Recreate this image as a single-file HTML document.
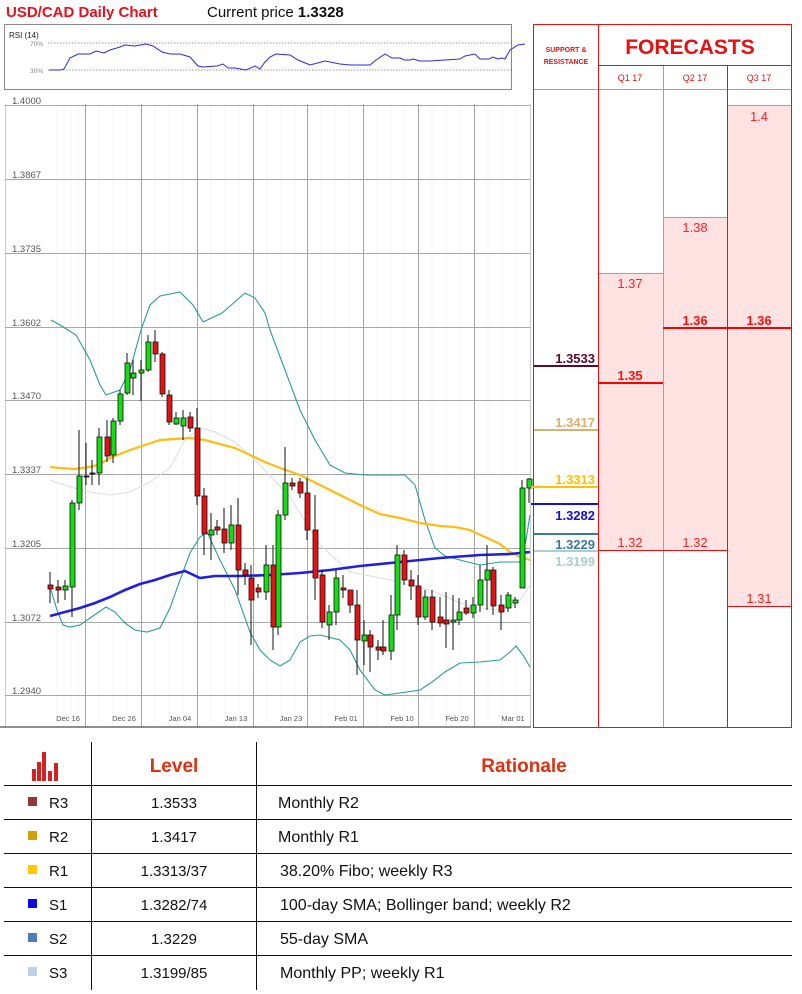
<!DOCTYPE html>
<html><head><meta charset="utf-8"><style>
html,body{margin:0;padding:0;background:#fff;}
body{width:802px;height:994px;overflow:hidden;position:relative;font-family:"Liberation Sans",sans-serif;}
svg{position:absolute;left:0;top:0;}
</style></head><body>
<svg width="802" height="994" viewBox="0 0 802 994" xmlns="http://www.w3.org/2000/svg" font-family="Liberation Sans, sans-serif">
<text x="6" y="17" font-size="15" font-weight="bold" fill="#e8101a">USD/CAD Daily Chart</text>
<text x="207" y="17" font-size="15" fill="#111">Current price <tspan font-weight="bold">1.3328</tspan></text>
<rect x="4.5" y="24.5" width="507" height="65" fill="#fff" stroke="#888"/>
<text x="9" y="38" font-size="8" fill="#222">RSI (14)</text>
<text x="30" y="46" font-size="6.5" fill="#888">70%</text>
<text x="30" y="73" font-size="6.5" fill="#888">30%</text>
<line x1="48" y1="43" x2="512" y2="43" stroke="#777" stroke-dasharray="1.5,1.5" stroke-width="0.8"/>
<line x1="48" y1="70" x2="512" y2="70" stroke="#777" stroke-dasharray="1.5,1.5" stroke-width="0.8"/>
<polyline fill="none" stroke="#2a2ae8" stroke-width="1" points="49,70 60,70 64,69 70,58 78,54 90,54 96,51 104,53 110,50 120,47 125,45 135,46 146,44 153,46 162,52 170,54 180,54 190,57 198,66 203,67 217,66 223,64 228,68 235,68 246,70 255,66 260,69 265,62 270,57 276,54 290,55 298,60 310,65 325,61 340,64 350,65 370,65 376,60 385,54 392,58 400,58 404,60 410,60 413,59 420,61 430,61 445,60 460,59 465,56 475,54 480,59 489,59 493,57 498,59 502,58 505,59 510,50 518,45 525,44"/>

<line x1="5.5" y1="104" x2="5.5" y2="727" stroke="#ccc"/>
<g stroke="#f6f6f6" stroke-width="1">
<line x1="57" y1="104" x2="57" y2="727"/><line x1="64" y1="104" x2="64" y2="727"/><line x1="71" y1="104" x2="71" y2="727"/><line x1="78" y1="104" x2="78" y2="727"/>
<line x1="99" y1="104" x2="99" y2="727"/><line x1="113" y1="104" x2="113" y2="727"/><line x1="127" y1="104" x2="127" y2="727"/>
<line x1="155" y1="104" x2="155" y2="727"/><line x1="169" y1="104" x2="169" y2="727"/><line x1="183" y1="104" x2="183" y2="727"/>
<line x1="211" y1="104" x2="211" y2="727"/><line x1="225" y1="104" x2="225" y2="727"/><line x1="239" y1="104" x2="239" y2="727"/>
<line x1="267" y1="104" x2="267" y2="727"/><line x1="281" y1="104" x2="281" y2="727"/><line x1="295" y1="104" x2="295" y2="727"/>
<line x1="321" y1="104" x2="321" y2="727"/><line x1="335" y1="104" x2="335" y2="727"/><line x1="349" y1="104" x2="349" y2="727"/>
<line x1="377" y1="104" x2="377" y2="727"/><line x1="391" y1="104" x2="391" y2="727"/><line x1="404" y1="104" x2="404" y2="727"/>
<line x1="432" y1="104" x2="432" y2="727"/><line x1="446" y1="104" x2="446" y2="727"/><line x1="460" y1="104" x2="460" y2="727"/>
<line x1="488" y1="104" x2="488" y2="727"/><line x1="502" y1="104" x2="502" y2="727"/><line x1="516" y1="104" x2="516" y2="727"/>
</g>
<g stroke="#a8a8a8" stroke-width="1">
<line x1="85.5" y1="104" x2="85.5" y2="727"/><line x1="141.5" y1="104" x2="141.5" y2="727"/><line x1="197.5" y1="104" x2="197.5" y2="727"/><line x1="253.5" y1="104" x2="253.5" y2="727"/><line x1="307.5" y1="104" x2="307.5" y2="727"/><line x1="363.5" y1="104" x2="363.5" y2="727"/><line x1="418.5" y1="104" x2="418.5" y2="727"/><line x1="474.5" y1="104" x2="474.5" y2="727"/>
<line x1="5" y1="105.5" x2="530" y2="105.5"/><line x1="5" y1="179.5" x2="530" y2="179.5"/><line x1="5" y1="253.5" x2="530" y2="253.5"/><line x1="5" y1="327.5" x2="530" y2="327.5"/><line x1="5" y1="400.5" x2="530" y2="400.5"/><line x1="5" y1="474.5" x2="530" y2="474.5"/><line x1="5" y1="548.5" x2="530" y2="548.5"/><line x1="5" y1="622.5" x2="530" y2="622.5"/><line x1="5" y1="695.5" x2="530" y2="695.5"/>
</g>
<line x1="530.5" y1="104" x2="530.5" y2="727" stroke="#ccc"/>
<g font-size="9.5" fill="#555">
<text x="12" y="104">1.4000</text><text x="12" y="178">1.3867</text><text x="12" y="252">1.3735</text><text x="12" y="326">1.3602</text><text x="12" y="399">1.3470</text><text x="12" y="473">1.3337</text><text x="12" y="547">1.3205</text><text x="12" y="621">1.3072</text><text x="12" y="694">1.2940</text>
</g>
<g font-size="7.5" fill="#555" text-anchor="middle">
<text x="68" y="721">Dec 16</text><text x="124" y="721">Dec 26</text><text x="180" y="721">Jan 04</text><text x="236" y="721">Jan 13</text><text x="291" y="721">Jan 23</text><text x="346" y="721">Feb 01</text><text x="402" y="721">Feb 10</text><text x="457" y="721">Feb 20</text><text x="513" y="721">Mar 01</text>
</g>
<line x1="0" y1="727" x2="531" y2="727" stroke="#222"/>

<polyline fill="none" stroke="#ddd" stroke-width="1" points="50,480 70,487 90,492 110,495 130,492 150,482 170,468 185,440 200,428 215,432 235,442 260,465 290,497 320,545 350,572 390,580 430,590 470,607 500,610 520,600 530,585"/>
<polyline fill="none" stroke="#2a9a9a" stroke-width="1.1" points="51,320 60,325 76,335 90,360 100,385 106,395 120,390 130,370 141,330 150,305 160,296 180,292 193,305 203,322 222,313 245,293 255,298 265,313 270,330 285,370 300,410 315,440 330,465 345,473 365,475 390,475 405,475 415,485 425,520 435,548 445,556 460,560 480,565 500,562 520,562 526,540 530,515"/>
<polyline fill="none" stroke="#2a9a9a" stroke-width="1.1" points="51,590 57,610 63,625 70,627 80,625 90,618 106,607 115,612 125,623 135,630 147,632 160,628 170,608 180,580 190,553 200,537 207,532 220,560 235,590 250,632 260,650 270,660 280,666 290,660 300,642 310,636 320,635 340,640 350,650 360,670 375,690 385,695 400,693 420,690 432,682 445,672 460,663 480,662 500,660 510,652 516,646 523,655 530,667"/>
<polyline fill="none" stroke="#ffbd14" stroke-width="2.2" points="50,467 60,468 75,469 90,467 100,464 110,458 130,450 145,445 160,440 175,439 190,438 205,440 220,444 235,448 250,455 265,462 280,468 300,475 320,485 340,495 360,505 380,514 400,518 420,523 440,526 455,527 470,530 485,537 500,544 510,552 520,557 530,560"/>
<polyline fill="none" stroke="#1f1fe0" stroke-width="2.6" points="50,616 65,612 80,608 95,603 110,597 125,590 140,584 155,580 170,575 185,571 200,578 215,576 240,576 270,575 300,573 330,570 360,566 400,562 440,558 480,555 510,554 530,552"/>

<g stroke="#111" stroke-width="1">
<path d="M50,572V603 M58,580V603 M65,580V600 M72,500V617 M79,430V510 M86,443V485 M92,460V485 M99,428V485 M107,420V462 M113,418V463 M120,390V425 M127,353V395 M133,360V395 M141,360V401 M148,335V372 M155,330V362 M162,352V397 M169,390V425 M176,412V425 M183,410V440 M190,412V432 M197,408V505 M204,488V555 M211,513V560 M217,520V535 M224,508V553 M231,505V550 M238,498V595 M245,563V585 M251,565V645 M258,584V598 M266,545V600 M273,545V650 M278,510V635 M285,447V520 M292,478V490 M300,478V498 M307,478V540 M315,495V600 M322,570V628 M329,605V640 M336,570V625 M343,575V598 M350,590V613 M357,590V675 M364,620V665 M370,630V672 M378,640V660 M383,620V655 M391,595V660 M397,545V630 M404,550V585 M411,570V600 M418,575V625 M425,590V620 M432,590V630 M440,597V627 M446,592V648 M453,595V650 M459,598V625 M466,600V615 M473,597V618 M480,565V612 M487,545V610 M493,567V615 M501,595V630 M508,592V612 M515,597V608 M522,480V570 M529,478V503"/>
</g>
<g stroke="#111" stroke-width="0.8">
<rect x="48" y="585" width="5" height="4" fill="#e81010"/>
<rect x="56" y="587" width="5" height="3" fill="#e81010"/>
<rect x="63" y="586" width="5" height="4" fill="#10e010"/>
<rect x="70" y="503" width="5" height="84" fill="#10e010"/>
<rect x="77" y="476" width="5" height="27" fill="#10e010"/>
<rect x="84" y="476" width="5" height="1" fill="#111"/>
<rect x="90" y="473" width="5" height="1" fill="#111"/>
<rect x="97" y="437" width="5" height="36" fill="#10e010"/>
<rect x="105" y="437" width="5" height="19" fill="#e81010"/>
<rect x="111" y="421" width="5" height="34" fill="#10e010"/>
<rect x="118" y="394" width="5" height="27" fill="#10e010"/>
<rect x="125" y="363" width="5" height="30" fill="#10e010"/>
<rect x="131" y="373" width="5" height="5" fill="#10e010"/>
<rect x="139" y="370" width="5" height="3" fill="#10e010"/>
<rect x="146" y="342" width="5" height="28" fill="#10e010"/>
<rect x="153" y="342" width="5" height="12" fill="#e81010"/>
<rect x="160" y="354" width="5" height="40" fill="#e81010"/>
<rect x="167" y="395" width="5" height="27" fill="#e81010"/>
<rect x="174" y="418" width="5" height="6" fill="#10e010"/>
<rect x="181" y="418" width="5" height="8" fill="#10e010"/>
<rect x="188" y="417" width="5" height="11" fill="#e81010"/>
<rect x="195" y="428" width="5" height="68" fill="#e81010"/>
<rect x="202" y="496" width="5" height="38" fill="#e81010"/>
<rect x="209" y="530" width="5" height="5" fill="#10e010"/>
<rect x="215" y="527" width="5" height="3" fill="#e81010"/>
<rect x="222" y="529" width="5" height="14" fill="#e81010"/>
<rect x="229" y="525" width="5" height="18" fill="#10e010"/>
<rect x="236" y="525" width="5" height="45" fill="#e81010"/>
<rect x="243" y="570" width="5" height="5" fill="#e81010"/>
<rect x="249" y="578" width="5" height="22" fill="#e81010"/>
<rect x="256" y="588" width="5" height="4" fill="#e81010"/>
<rect x="264" y="565" width="5" height="27" fill="#10e010"/>
<rect x="271" y="565" width="5" height="62" fill="#e81010"/>
<rect x="276" y="515" width="5" height="112" fill="#10e010"/>
<rect x="283" y="483" width="5" height="32" fill="#10e010"/>
<rect x="290" y="483" width="5" height="3" fill="#e81010"/>
<rect x="298" y="482" width="5" height="11" fill="#e81010"/>
<rect x="305" y="493" width="5" height="37" fill="#e81010"/>
<rect x="313" y="530" width="5" height="48" fill="#e81010"/>
<rect x="320" y="575" width="5" height="47" fill="#e81010"/>
<rect x="327" y="612" width="5" height="13" fill="#10e010"/>
<rect x="334" y="578" width="5" height="34" fill="#10e010"/>
<rect x="341" y="588" width="5" height="2" fill="#e81010"/>
<rect x="348" y="590" width="5" height="15" fill="#e81010"/>
<rect x="355" y="605" width="5" height="35" fill="#e81010"/>
<rect x="362" y="635" width="5" height="6" fill="#10e010"/>
<rect x="368" y="635" width="5" height="12" fill="#e81010"/>
<rect x="376" y="647" width="5" height="3" fill="#e81010"/>
<rect x="381" y="647" width="5" height="4" fill="#e81010"/>
<rect x="389" y="615" width="5" height="36" fill="#10e010"/>
<rect x="395" y="555" width="5" height="60" fill="#10e010"/>
<rect x="402" y="555" width="5" height="25" fill="#e81010"/>
<rect x="409" y="580" width="5" height="6" fill="#e81010"/>
<rect x="416" y="586" width="5" height="31" fill="#e81010"/>
<rect x="423" y="597" width="5" height="20" fill="#10e010"/>
<rect x="430" y="597" width="5" height="25" fill="#e81010"/>
<rect x="438" y="617" width="5" height="6" fill="#e81010"/>
<rect x="444" y="620" width="5" height="4" fill="#e81010"/>
<rect x="451" y="620" width="5" height="2" fill="#10e010"/>
<rect x="457" y="612" width="5" height="8" fill="#10e010"/>
<rect x="464" y="608" width="5" height="5" fill="#e81010"/>
<rect x="471" y="605" width="5" height="8" fill="#10e010"/>
<rect x="478" y="580" width="5" height="25" fill="#10e010"/>
<rect x="485" y="570" width="5" height="10" fill="#10e010"/>
<rect x="491" y="570" width="5" height="36" fill="#e81010"/>
<rect x="499" y="605" width="5" height="7" fill="#e81010"/>
<rect x="506" y="595" width="5" height="13" fill="#10e010"/>
<rect x="513" y="600" width="5" height="3" fill="#10e010"/>
<rect x="520" y="488" width="5" height="100" fill="#10e010"/>
<rect x="527" y="479" width="5" height="9" fill="#10e010"/>
</g>

<rect x="598" y="273" width="65" height="277" fill="#ffe3e3"/>
<rect x="663" y="217" width="64" height="333" fill="#ffe3e3"/>
<rect x="727" y="105" width="64" height="501" fill="#ffe3e3"/>
<g stroke="#f08080" stroke-width="1">
<line x1="534" y1="89.5" x2="791" y2="89.5"/>
<line x1="598" y1="273.5" x2="663" y2="273.5"/>
<line x1="663" y1="217.5" x2="727" y2="217.5"/>
<line x1="727" y1="105.5" x2="791" y2="105.5"/>
<line x1="663.5" y1="65" x2="663.5" y2="727"/>
</g>
<g stroke="#e81010" stroke-width="1" fill="none">
<rect x="533.5" y="24.5" width="258" height="703"/>
<line x1="598.5" y1="24" x2="598.5" y2="727"/>
<line x1="727.5" y1="65" x2="727.5" y2="727"/>
<line x1="598" y1="65.5" x2="791" y2="65.5"/>
<line x1="598" y1="550.5" x2="727" y2="550.5"/>
<line x1="727" y1="606.5" x2="791" y2="606.5"/>
</g>
<line x1="598" y1="383" x2="663" y2="383" stroke="#f00" stroke-width="2"/>
<line x1="663" y1="328" x2="791" y2="328" stroke="#f00" stroke-width="2"/>
<g font-size="7" font-weight="bold" fill="#e81010" text-anchor="middle">
<text x="566" y="52">SUPPORT &amp;</text><text x="566" y="64">RESISTANCE</text>
</g>
<text x="690" y="54" font-size="21" font-weight="bold" fill="#e81010" text-anchor="middle">FORECASTS</text>
<g font-size="9" fill="#e81010" text-anchor="middle">
<text x="630" y="81">Q1 17</text><text x="695" y="81">Q2 17</text><text x="759" y="81">Q3 17</text>
</g>
<g font-size="13" fill="#ff2020" text-anchor="middle">
<text x="759" y="121">1.4</text>
<text x="695" y="232">1.38</text>
<text x="630" y="288">1.37</text>
<text x="630" y="547">1.32</text>
<text x="695" y="547">1.32</text>
<text x="759" y="603">1.31</text>
</g>
<g font-size="13" font-weight="bold" fill="#ff1010" text-anchor="middle">
<text x="630" y="380">1.35</text><text x="695" y="325">1.36</text><text x="759" y="325">1.36</text>
</g>
<line x1="534" y1="366" x2="598" y2="366" stroke="#5a0a2a" stroke-width="2"/>
<line x1="534" y1="430" x2="598" y2="430" stroke="#d8b070" stroke-width="2"/>
<line x1="531" y1="487" x2="598" y2="487" stroke="#ffc000" stroke-width="2"/>
<line x1="531" y1="504" x2="598" y2="504" stroke="#1010e0" stroke-width="2"/>
<line x1="534" y1="534" x2="598" y2="534" stroke="#3a7aa0" stroke-width="2"/>
<line x1="534" y1="551" x2="598" y2="551" stroke="#a8d0d0" stroke-width="2"/>
<g font-size="13" font-weight="bold" text-anchor="end">
<text x="595" y="363" fill="#5a0a2a">1.3533</text>
<text x="595" y="427" fill="#d8b070">1.3417</text>
<text x="595" y="484" fill="#ffc000">1.3313</text>
<text x="595" y="520" fill="#1010e0">1.3282</text>
<text x="595" y="549" fill="#3a7aa0">1.3229</text>
<text x="595" y="566" fill="#a8d0d0">1.3199</text>
</g>

<g stroke="#111" stroke-width="1">
<line x1="91.5" y1="742" x2="91.5" y2="990"/>
<line x1="256.5" y1="742" x2="256.5" y2="990"/>
<line x1="4" y1="785.5" x2="792" y2="785.5"/>
<line x1="4" y1="819.5" x2="792" y2="819.5"/>
<line x1="4" y1="853.5" x2="792" y2="853.5"/>
<line x1="4" y1="887.5" x2="792" y2="887.5"/>
<line x1="4" y1="921.5" x2="792" y2="921.5"/>
<line x1="4" y1="955.5" x2="792" y2="955.5"/>
</g>
<g fill="#d92020">
<rect x="32" y="769" width="4" height="12"/><rect x="37" y="762" width="4" height="19"/><rect x="42" y="752" width="4" height="29"/><rect x="48" y="771" width="4" height="10"/><rect x="54" y="763" width="4" height="18"/>
</g>
<text x="174" y="772" font-size="19" font-weight="bold" fill="#e03010" text-anchor="middle">Level</text>
<text x="524" y="772" font-size="19" font-weight="bold" fill="#e03010" text-anchor="middle">Rationale</text>
<g font-size="15" fill="#111">
<rect x="28" y="797" width="9" height="9" fill="#953735"/><text x="49" y="808">R3</text>
<rect x="28" y="831" width="9" height="9" fill="#d4a000"/><text x="49" y="842">R2</text>
<rect x="28" y="865" width="9" height="9" fill="#ffc800"/><text x="49" y="876">R1</text>
<rect x="28" y="899" width="9" height="9" fill="#0a0ae8"/><text x="49" y="910">S1</text>
<rect x="28" y="933" width="9" height="9" fill="#4a7ec0"/><text x="49" y="944">S2</text>
<rect x="28" y="967" width="9" height="9" fill="#bcd0e8"/><text x="49" y="978">S3</text>
</g>
<g font-size="15" fill="#111" text-anchor="middle">
<text x="174" y="808">1.3533</text><text x="174" y="842">1.3417</text><text x="174" y="876">1.3313/37</text><text x="174" y="910">1.3282/74</text><text x="174" y="944">1.3229</text><text x="174" y="978">1.3199/85</text>
</g>
<g font-size="16" fill="#111">
<text x="278" y="808">Monthly R2</text><text x="278" y="842">Monthly R1</text><text x="280" y="876">38.20% Fibo; weekly R3</text><text x="280" y="910">100-day SMA; Bollinger band; weekly R2</text><text x="280" y="944">55-day SMA</text><text x="280" y="978">Monthly PP; weekly R1</text>
</g>
</svg>
</body></html>
